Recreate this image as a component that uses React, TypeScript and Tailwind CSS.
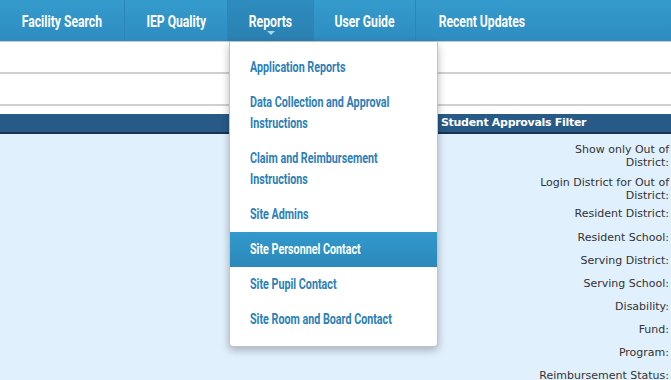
import React from "react";

const navFont = { fontFamily: 'Roboto, "Liberation Sans", sans-serif' };
const bodyFont = { fontFamily: '"DejaVu Sans", Verdana, sans-serif' };

const navItems: { label: string; w: string; active?: boolean; last?: boolean }[] = [
  { label: "Facility Search", w: "w-[125px]" },
  { label: "IEP Quality", w: "w-[103px]" },
  { label: "Reports", w: "w-[86px]", active: true },
  { label: "User Guide", w: "w-[102px]" },
  { label: "Recent Updates", w: "w-[131px]", last: true },
];

const menu: { lines: string[]; active?: boolean }[] = [
  { lines: ["Application Reports"] },
  { lines: ["Data Collection and Approval", "Instructions"] },
  { lines: ["Claim and Reimbursement", "Instructions"] },
  { lines: ["Site Admins"] },
  { lines: ["Site Personnel Contact"], active: true },
  { lines: ["Site Pupil Contact"] },
  { lines: ["Site Room and Board Contact"] },
];

export default function App() {
  return (
    <div className="relative w-[671px] h-[380px] overflow-hidden bg-[#e1f0fd]">
      {/* Nav */}
      <div
        className="flex h-[42px] bg-gradient-to-b from-[#359bcd] to-[#2d8cc0] border-b border-[#c9c9c9]"
        style={navFont}
      >
        {navItems.map((n) => (
          <div
            key={n.label}
            className={`relative shrink-0 flex items-center justify-center pt-[2px] ${n.w} ${
              n.last ? "" : "border-r border-[#2b86b7]"
            } ${n.active ? "bg-gradient-to-b from-[#2e8cbf] to-[#2a81b1]" : ""}`}
          >
            <span className="inline-block whitespace-nowrap text-white font-bold text-[16px] scale-x-[0.76]">
              {n.label}
            </span>
            {n.active && (
              <span className="absolute left-1/2 -translate-x-1/2 top-[31px] w-0 h-0 border-l-[4px] border-r-[4px] border-t-[4px] border-l-transparent border-r-transparent border-t-[#a9d6f0]" />
            )}
          </div>
        ))}
      </div>

      {/* White rows */}
      <div className="bg-white">
        <div className="h-[32px] border-b-2 border-[#d0d0d0]" />
        <div className="h-[32px] border-b-2 border-[#d0d0d0]" />
        <div className="h-[8px]" />
      </div>

      {/* Section header */}
      <div
        className="h-[20px] bg-[#285a88] border-b-2 border-[#1a3350] flex items-center pl-[441px] text-white font-bold text-[11px] tracking-[-0.3px]"
        style={bodyFont}
      >
        Student Approvals Filter
      </div>

      {/* Body */}
      <div className="flex">
        <div className="flex-1" />
        <div
          className="w-[140px] mr-[2px] flex flex-col items-end text-right text-[#333] text-[11px] leading-[13px] whitespace-nowrap pt-[9px]"
          style={bodyFont}
        >
          <div className="h-[26px]">Show only Out of<br />District:</div>
          <div className="h-[26px] mt-[7px]">Login District for Out of<br />District:</div>
          <div className="h-[13px] mt-[5px]">Resident District:</div>
          <div className="h-[13px] mt-[11px]">Resident School:</div>
          <div className="h-[13px] mt-[10px]">Serving District:</div>
          <div className="h-[13px] mt-[10px]">Serving School:</div>
          <div className="h-[13px] mt-[10px]">Disability:</div>
          <div className="h-[13px] mt-[10px]">Fund:</div>
          <div className="h-[13px] mt-[10px]">Program:</div>
          <div className="h-[13px] mt-[10px]">Reimbursement Status:</div>
        </div>
      </div>

      {/* Dropdown */}
      <div
        className="absolute left-[229px] top-[42px] w-[209px] bg-white border border-[#c4c4c4] border-t-0 rounded-b-[4px] shadow-[0_3px_8px_rgba(0,0,0,0.28)] pt-[8px] pb-[9px]"
        style={navFont}
      >
        {menu.map((m, i) => (
          <div
            key={i}
            className={`px-[20px] py-[7px] ${
              m.active
                ? "bg-gradient-to-b from-[#3399cb] to-[#2c88bb] text-white"
                : "text-[#2c80b8]"
            }`}
          >
            {m.lines.map((l) => (
              <span
                key={l}
                className="block h-[21px] leading-[21px] whitespace-nowrap origin-left scale-x-[0.74] text-[14.5px] font-bold"
              >
                {l}
              </span>
            ))}
          </div>
        ))}
      </div>
    </div>
  );
}
